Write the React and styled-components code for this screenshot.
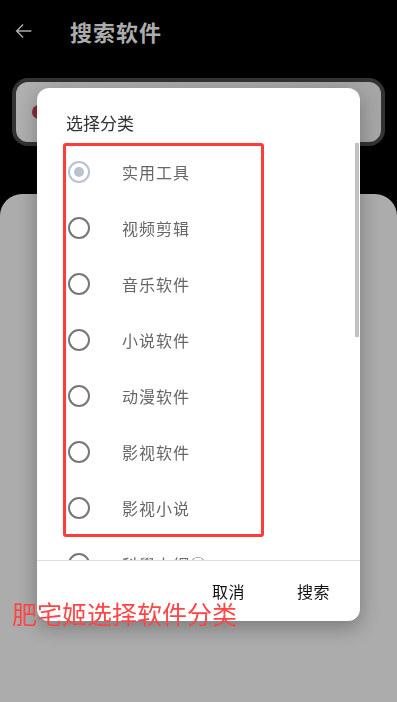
import React, { useState } from "react";
import styled, { createGlobalStyle } from "styled-components";

const categories = [
  "实用工具",
  "视频剪辑",
  "音乐软件",
  "小说软件",
  "动漫软件",
  "影视软件",
  "影视小说",
  "科學上網ⓘ",
];

const GlobalStyle = createGlobalStyle`
  html, body {
    margin: 0;
    padding: 0;
    background: #000;
  }
  body {
    font-family: "Noto Sans CJK SC", "Noto Sans", sans-serif;
  }
`;

const Screen = styled.div`
  width: 397px;
  height: 702px;
  background: #000;
  display: flex;
  flex-direction: column;
  overflow: hidden;
`;

const AppBar = styled.div`
  height: 62px;
  display: flex;
  align-items: center;
  padding: 0 0 0 13px;
  gap: 35px;
  color: #acacac;
`;

const Title = styled.h1`
  margin: 0;
  font-size: 22px;
  font-weight: 700;
  color: #acacac;
  letter-spacing: 1px;
`;

const SearchBox = styled.div`
  margin: 16px 12px 0;
  height: 60px;
  border: 4px solid #333;
  border-radius: 16px;
  background: linear-gradient(90deg, #b0b0b0, #a6a6a6);
  display: flex;
  align-items: center;
  padding-left: 16px;
`;

const Dot = styled.span`
  width: 14px;
  height: 14px;
  border-radius: 50%;
  background: #8a2a38;
`;

const Panel = styled.div`
  margin-top: 48px;
  flex: 1;
  background: #acacac;
  border-radius: 22px 22px 0 0;
`;

const Dialog = styled.div`
  position: fixed;
  left: 37px;
  top: 88px;
  width: 323px;
  height: 533px;
  background: #fff;
  border-radius: 12px;
  box-shadow: 0 6px 20px rgba(0, 0, 0, 0.3);
  display: flex;
  flex-direction: column;
  overflow: hidden;
`;

const DialogTitle = styled.div`
  padding: 22px 0 0 29px;
  height: 33px;
  font-size: 17px;
  color: #333;
`;

const ListWrap = styled.div`
  position: relative;
  flex: 1;
  overflow: hidden;
  border-bottom: 1px solid #dedede;
`;

const List = styled.div`
  display: flex;
  flex-direction: column;
  padding-top: 1px;
`;

const Row = styled.label`
  height: 56px;
  display: flex;
  align-items: center;
  padding-left: 31px;
  flex-shrink: 0;
`;

const Radio = styled.span`
  width: 22px;
  height: 22px;
  box-sizing: border-box;
  border-radius: 50%;
  border: 2px solid ${(p) => (p.$checked ? "#bac1cf" : "#777")};
  display: flex;
  align-items: center;
  justify-content: center;
  &::after {
    content: "";
    width: 10px;
    height: 10px;
    border-radius: 50%;
    background: ${(p) => (p.$checked ? "#bac1cf" : "transparent")};
  }
`;

const Label = styled.span`
  margin-left: 32px;
  font-size: 16px;
  color: #666;
  letter-spacing: 1px;
`;

const ScrollBar = styled.div`
  position: absolute;
  right: 1px;
  top: 0;
  width: 4px;
  height: 194px;
  background: #c2c2c2;
`;

const Annotation = styled.div`
  position: absolute;
  left: 26px;
  top: 0;
  width: 201px;
  height: 394px;
  box-sizing: border-box;
  border: 3px solid #ff3b3b;
  border-radius: 3px;
`;

const Actions = styled.div`
  height: 60px;
  display: flex;
  justify-content: flex-end;
  align-items: center;
  padding-right: 30px;
  gap: 52px;
`;

const ActionButton = styled.button`
  border: none;
  background: none;
  padding: 0;
  font-family: inherit;
  font-size: 16px;
  color: #111;
  letter-spacing: 0.5px;
`;

const Caption = styled.div`
  position: fixed;
  left: 12px;
  top: 596px;
  font-size: 25px;
  color: #ff4545;
  line-height: 34px;
`;

function BackArrow() {
  return (
    <svg width="22" height="22" viewBox="0 0 24 24" fill="none" stroke="#acacac" strokeWidth="1.6">
      <path d="M20 12H4M11 5l-7 7 7 7" />
    </svg>
  );
}

export default function App() {
  const [selected, setSelected] = useState(0);

  return (
    <>
      <GlobalStyle />
      <Screen>
        <AppBar>
          <BackArrow />
          <Title>搜索软件</Title>
        </AppBar>
        <SearchBox>
          <Dot />
        </SearchBox>
        <Panel />
      </Screen>

      <Dialog>
        <DialogTitle>选择分类</DialogTitle>
        <ListWrap>
          <List>
            {categories.map((name, i) => (
              <Row key={name} onClick={() => setSelected(i)}>
                <Radio $checked={selected === i} />
                <Label>{name}</Label>
              </Row>
            ))}
          </List>
          <ScrollBar />
          <Annotation />
        </ListWrap>
        <Actions>
          <ActionButton>取消</ActionButton>
          <ActionButton>搜索</ActionButton>
        </Actions>
      </Dialog>

      <Caption>肥宅姬选择软件分类</Caption>
    </>
  );
}
